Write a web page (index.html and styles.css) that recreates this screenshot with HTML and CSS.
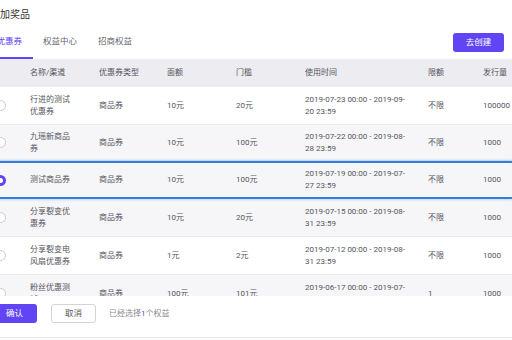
FILE: index.html
```html
<!DOCTYPE html>
<html lang="zh">
<head>
  <meta charset="UTF-8">
  <title>添加奖品</title>
  <link rel="stylesheet" href="styles.css">
</head>
<body>
  <div class="page">
    <!-- 标题 -->
    <h1 class="title">加奖品</h1>

    <!-- 标签页 + 创建按钮 -->
    <div class="toolbar">
      <div class="tabs">
        <a href="#" class="tab active">优惠券</a>
        <a href="#" class="tab">权益中心</a>
        <a href="#" class="tab">招商权益</a>
      </div>
      <a href="#" class="btn btn-primary btn-create">去创建</a>
    </div>

    <!-- 表格 -->
    <div class="table">
      <div class="row head">
        <div class="cell"></div>
        <div class="cell name">名称/渠道</div>
        <div class="cell">优惠券类型</div>
        <div class="cell">面额</div>
        <div class="cell">门槛</div>
        <div class="cell time">使用时间</div>
        <div class="cell">限额</div>
        <div class="cell">发行量</div>
      </div>
      <div class="table-body">
        <div class="row">
          <div class="cell check"><span class="radio"></span></div>
          <div class="cell name">行进的测试优惠券</div>
          <div class="cell">商品券</div>
          <div class="cell">10元</div>
          <div class="cell">20元</div>
          <div class="cell time">2019-07-23 00:00 - 2019-09-20 23:59</div>
          <div class="cell">不限</div>
          <div class="cell">100000</div>
        </div>
        <div class="row gray short">
          <div class="cell check"><span class="radio"></span></div>
          <div class="cell name">九瑶新商品券</div>
          <div class="cell">商品券</div>
          <div class="cell">10元</div>
          <div class="cell">100元</div>
          <div class="cell time">2019-07-22 00:00 - 2019-08-28 23:59</div>
          <div class="cell">不限</div>
          <div class="cell">1000</div>
        </div>
        <div class="row gray selected">
          <div class="cell check"><span class="radio checked"></span></div>
          <div class="cell name">测试商品券</div>
          <div class="cell">商品券</div>
          <div class="cell">10元</div>
          <div class="cell">100元</div>
          <div class="cell time">2019-07-19 00:00 - 2019-07-27 23:59</div>
          <div class="cell">不限</div>
          <div class="cell">1000</div>
        </div>
        <div class="row gray">
          <div class="cell check"><span class="radio"></span></div>
          <div class="cell name">分享裂变优惠券</div>
          <div class="cell">商品券</div>
          <div class="cell">10元</div>
          <div class="cell">20元</div>
          <div class="cell time">2019-07-15 00:00 - 2019-08-31 23:59</div>
          <div class="cell">不限</div>
          <div class="cell">1000</div>
        </div>
        <div class="row">
          <div class="cell check"><span class="radio"></span></div>
          <div class="cell name">分享裂变电风扇优惠券</div>
          <div class="cell">商品券</div>
          <div class="cell">1元</div>
          <div class="cell">2元</div>
          <div class="cell time">2019-07-12 00:00 - 2019-08-31 23:59</div>
          <div class="cell">不限</div>
          <div class="cell">1000</div>
        </div>
        <div class="row gray">
          <div class="cell check"><span class="radio"></span></div>
          <div class="cell name">粉丝优惠测试 2</div>
          <div class="cell">商品券</div>
          <div class="cell">100元</div>
          <div class="cell">101元</div>
          <div class="cell time">2019-06-17 00:00 - 2019-07-31 23:59</div>
          <div class="cell">1</div>
          <div class="cell">1000</div>
        </div>
      </div>
    </div>

    <!-- 底部操作 -->
    <div class="footer">
      <a href="#" class="btn btn-primary btn-ok">确认</a>
      <a href="#" class="btn btn-default">取消</a>
      <span class="picked">已经选择<em>1</em>个权益</span>
    </div>
  </div>
</body>
</html>
```

FILE: styles.css
```css
body {
  margin: 0;
  font-family: Roboto, "Noto Sans CJK SC", sans-serif;
  font-size: 8px;
  color: #55555c;
  background: #fff;
}
a {
  text-decoration: none;
}
.page {
  height: 340px;
  display: flex;
  flex-direction: column;
  overflow: hidden;
}
.title {
  margin: 0;
  padding-top: 4px;
  height: 22px;
  line-height: 22px;
  font-size: 10px;
  font-weight: normal;
  color: #333;
}

/* 标签页 */
.toolbar {
  height: 33px;
  display: flex;
  justify-content: space-between;
  align-items: flex-start;
  padding-right: 8px;
}
.tabs {
  display: flex;
  margin-left: -14px;
}
.tab {
  height: 31px;
  line-height: 31px;
  padding: 0 10.5px;
  font-size: 8.5px;
  color: #66666c;
  border-bottom: 2px solid transparent;
}
.tab.active {
  color: #6145f4;
  border-bottom-color: #6145f4;
}

/* 按钮 */
.btn {
  display: inline-block;
  box-sizing: border-box;
  width: 45px;
  height: 19px;
  line-height: 17px;
  font-size: 8.5px;
  text-align: center;
  border-radius: 3px;
  border: 1px solid transparent;
}
.btn-primary {
  background: #6145f4;
  color: #fff;
}
.btn-default {
  background: #fff;
  border-color: #d3d3d8;
  color: #555;
}
.btn-create {
  width: 51px;
  margin-top: 7px;
}

/* 表格 */
.table {
  flex: 1;
  display: flex;
  flex-direction: column;
  min-height: 0;
  margin-left: -20px;
}
.table-body {
  flex: 1;
  overflow: hidden;
}
.row {
  display: grid;
  grid-template-columns: 50px 69px 68px 69px 69px 123px 55px 80px;
  align-items: center;
  box-sizing: border-box;
  height: 38px;
  line-height: 12px;
  background: #fff;
  border-bottom: 1px solid #e9e9ee;
}
.row.head {
  height: 28px;
  background: #ececf1;
  border-bottom: none;
}
.row.gray {
  background: #f6f6f9;
}
.row.short {
  height: 36px;
}
.row.selected {
  position: relative;
  z-index: 1;
  border-top: 2px solid #2f7fdc;
  border-bottom: 2px solid #2f7fdc;
  box-shadow: 0 0 3px rgba(47, 127, 220, 0.45);
}
.cell {
  padding-right: 10px;
}
.cell.name {
  padding-right: 25px;
}
.cell.time {
  padding-right: 18px;
}
.cell.check {
  padding-left: 14.5px;
  display: flex;
}
.radio {
  box-sizing: border-box;
  width: 11px;
  height: 11px;
  border-radius: 50%;
  border: 1px solid #c9c9ce;
  background: #fff;
}
.radio.checked {
  border: 3.5px solid #6145f4;
  background: #fff;
}

/* 底部 */
.footer {
  height: 33px;
  margin-bottom: 2px;
  border-bottom: 1px solid #e6e6ea;
  display: flex;
  align-items: flex-start;
  padding-top: 8px;
  box-sizing: content-box;
  margin-left: -8px;
  gap: 14px;
}
.footer .btn {
  flex: none;
}
.picked {
  line-height: 19px;
  color: #8a8a90;
  margin-left: -1px;
}
.picked em {
  font-style: normal;
  color: #6145f4;
}
```
